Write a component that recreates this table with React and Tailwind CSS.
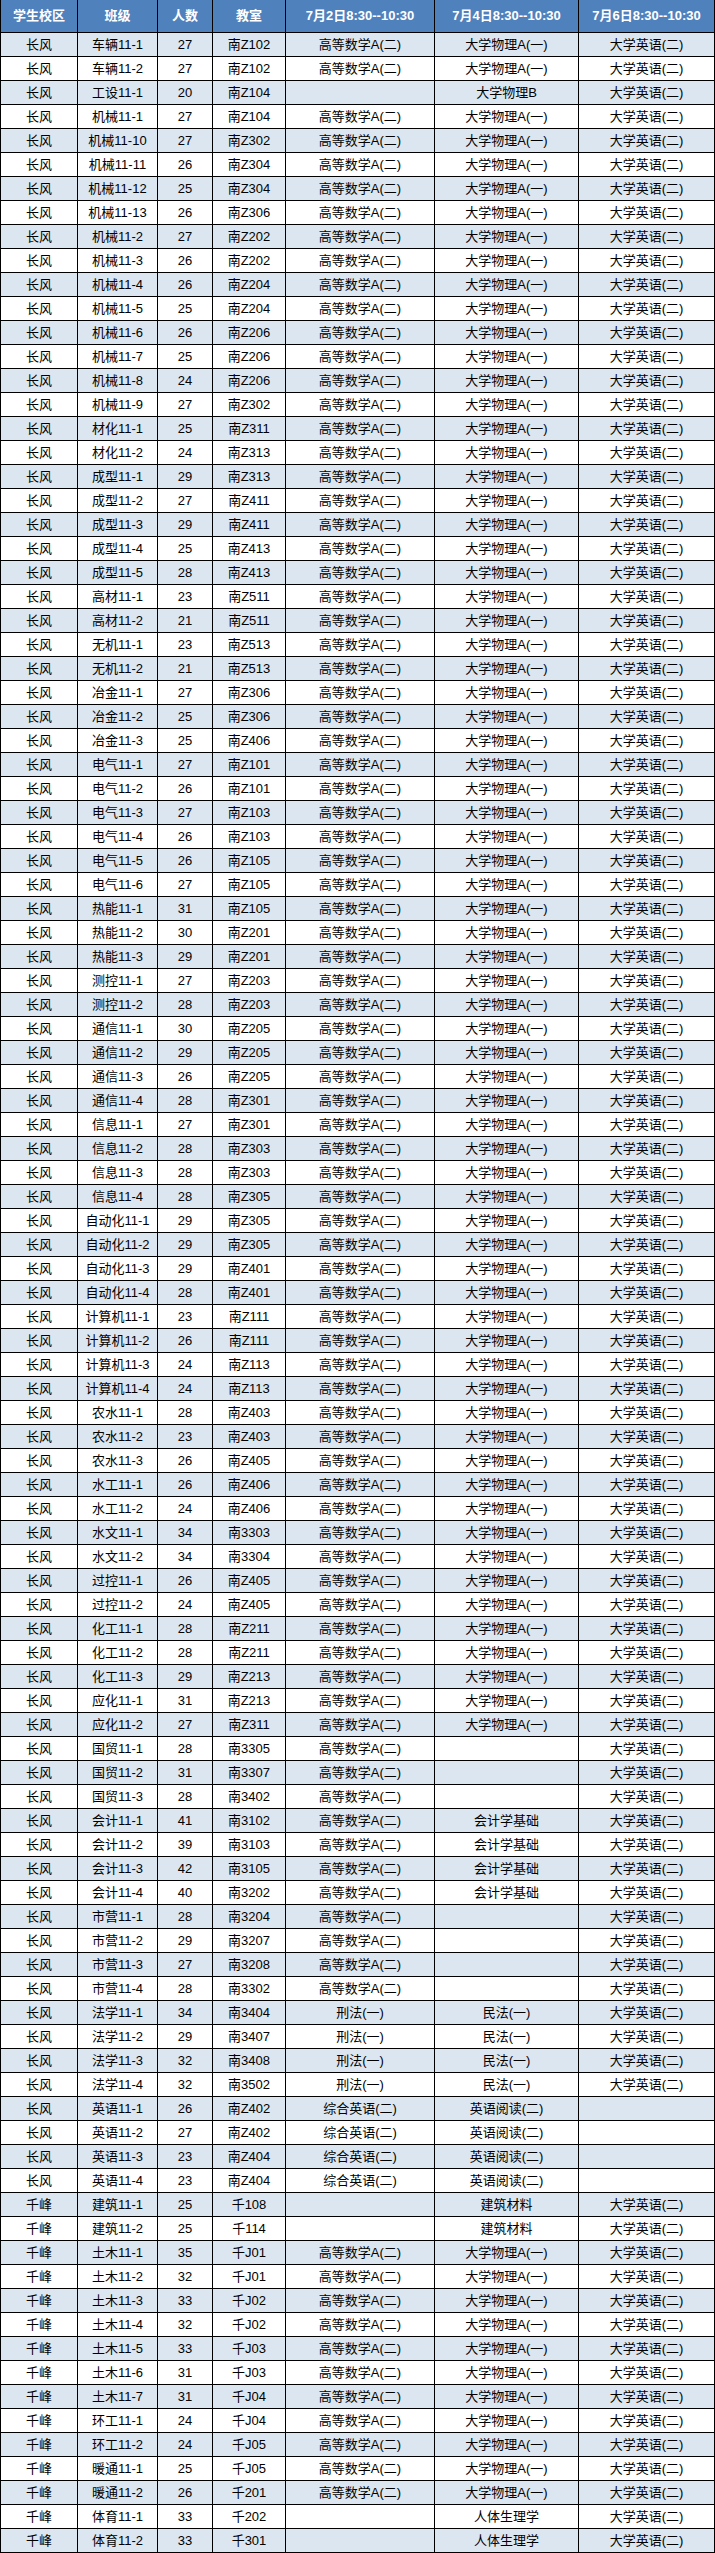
const A = "高等数学A(二)";
const P = "大学物理A(一)";
const E = "大学英语(二)";

const raw = [
  ["长风", "车辆11-1", "27", "南Z102", A, P, E],
  ["长风", "车辆11-2", "27", "南Z102", A, P, E],
  ["长风", "工设11-1", "20", "南Z104", "", "大学物理B", E],
  ["长风", "机械11-1", "27", "南Z104", A, P, E],
  ["长风", "机械11-10", "27", "南Z302", A, P, E],
  ["长风", "机械11-11", "26", "南Z304", A, P, E],
  ["长风", "机械11-12", "25", "南Z304", A, P, E],
  ["长风", "机械11-13", "26", "南Z306", A, P, E],
  ["长风", "机械11-2", "27", "南Z202", A, P, E],
  ["长风", "机械11-3", "26", "南Z202", A, P, E],
  ["长风", "机械11-4", "26", "南Z204", A, P, E],
  ["长风", "机械11-5", "25", "南Z204", A, P, E],
  ["长风", "机械11-6", "26", "南Z206", A, P, E],
  ["长风", "机械11-7", "25", "南Z206", A, P, E],
  ["长风", "机械11-8", "24", "南Z206", A, P, E],
  ["长风", "机械11-9", "27", "南Z302", A, P, E],
  ["长风", "材化11-1", "25", "南Z311", A, P, E],
  ["长风", "材化11-2", "24", "南Z313", A, P, E],
  ["长风", "成型11-1", "29", "南Z313", A, P, E],
  ["长风", "成型11-2", "27", "南Z411", A, P, E],
  ["长风", "成型11-3", "29", "南Z411", A, P, E],
  ["长风", "成型11-4", "25", "南Z413", A, P, E],
  ["长风", "成型11-5", "28", "南Z413", A, P, E],
  ["长风", "高材11-1", "23", "南Z511", A, P, E],
  ["长风", "高材11-2", "21", "南Z511", A, P, E],
  ["长风", "无机11-1", "23", "南Z513", A, P, E],
  ["长风", "无机11-2", "21", "南Z513", A, P, E],
  ["长风", "冶金11-1", "27", "南Z306", A, P, E],
  ["长风", "冶金11-2", "25", "南Z306", A, P, E],
  ["长风", "冶金11-3", "25", "南Z406", A, P, E],
  ["长风", "电气11-1", "27", "南Z101", A, P, E],
  ["长风", "电气11-2", "26", "南Z101", A, P, E],
  ["长风", "电气11-3", "27", "南Z103", A, P, E],
  ["长风", "电气11-4", "26", "南Z103", A, P, E],
  ["长风", "电气11-5", "26", "南Z105", A, P, E],
  ["长风", "电气11-6", "27", "南Z105", A, P, E],
  ["长风", "热能11-1", "31", "南Z105", A, P, E],
  ["长风", "热能11-2", "30", "南Z201", A, P, E],
  ["长风", "热能11-3", "29", "南Z201", A, P, E],
  ["长风", "测控11-1", "27", "南Z203", A, P, E],
  ["长风", "测控11-2", "28", "南Z203", A, P, E],
  ["长风", "通信11-1", "30", "南Z205", A, P, E],
  ["长风", "通信11-2", "29", "南Z205", A, P, E],
  ["长风", "通信11-3", "26", "南Z205", A, P, E],
  ["长风", "通信11-4", "28", "南Z301", A, P, E],
  ["长风", "信息11-1", "27", "南Z301", A, P, E],
  ["长风", "信息11-2", "28", "南Z303", A, P, E],
  ["长风", "信息11-3", "28", "南Z303", A, P, E],
  ["长风", "信息11-4", "28", "南Z305", A, P, E],
  ["长风", "自动化11-1", "29", "南Z305", A, P, E],
  ["长风", "自动化11-2", "29", "南Z305", A, P, E],
  ["长风", "自动化11-3", "29", "南Z401", A, P, E],
  ["长风", "自动化11-4", "28", "南Z401", A, P, E],
  ["长风", "计算机11-1", "23", "南Z111", A, P, E],
  ["长风", "计算机11-2", "26", "南Z111", A, P, E],
  ["长风", "计算机11-3", "24", "南Z113", A, P, E],
  ["长风", "计算机11-4", "24", "南Z113", A, P, E],
  ["长风", "农水11-1", "28", "南Z403", A, P, E],
  ["长风", "农水11-2", "23", "南Z403", A, P, E],
  ["长风", "农水11-3", "26", "南Z405", A, P, E],
  ["长风", "水工11-1", "26", "南Z406", A, P, E],
  ["长风", "水工11-2", "24", "南Z406", A, P, E],
  ["长风", "水文11-1", "34", "南3303", A, P, E],
  ["长风", "水文11-2", "34", "南3304", A, P, E],
  ["长风", "过控11-1", "26", "南Z405", A, P, E],
  ["长风", "过控11-2", "24", "南Z405", A, P, E],
  ["长风", "化工11-1", "28", "南Z211", A, P, E],
  ["长风", "化工11-2", "28", "南Z211", A, P, E],
  ["长风", "化工11-3", "29", "南Z213", A, P, E],
  ["长风", "应化11-1", "31", "南Z213", A, P, E],
  ["长风", "应化11-2", "27", "南Z311", A, P, E],
  ["长风", "国贸11-1", "28", "南3305", A, "", E],
  ["长风", "国贸11-2", "31", "南3307", A, "", E],
  ["长风", "国贸11-3", "28", "南3402", A, "", E],
  ["长风", "会计11-1", "41", "南3102", A, "会计学基础", E],
  ["长风", "会计11-2", "39", "南3103", A, "会计学基础", E],
  ["长风", "会计11-3", "42", "南3105", A, "会计学基础", E],
  ["长风", "会计11-4", "40", "南3202", A, "会计学基础", E],
  ["长风", "市营11-1", "28", "南3204", A, "", E],
  ["长风", "市营11-2", "29", "南3207", A, "", E],
  ["长风", "市营11-3", "27", "南3208", A, "", E],
  ["长风", "市营11-4", "28", "南3302", A, "", E],
  ["长风", "法学11-1", "34", "南3404", "刑法(一)", "民法(一)", E],
  ["长风", "法学11-2", "29", "南3407", "刑法(一)", "民法(一)", E],
  ["长风", "法学11-3", "32", "南3408", "刑法(一)", "民法(一)", E],
  ["长风", "法学11-4", "32", "南3502", "刑法(一)", "民法(一)", E],
  ["长风", "英语11-1", "26", "南Z402", "综合英语(二)", "英语阅读(二)", ""],
  ["长风", "英语11-2", "27", "南Z402", "综合英语(二)", "英语阅读(二)", ""],
  ["长风", "英语11-3", "23", "南Z404", "综合英语(二)", "英语阅读(二)", ""],
  ["长风", "英语11-4", "23", "南Z404", "综合英语(二)", "英语阅读(二)", ""],
  ["千峰", "建筑11-1", "25", "千108", "", "建筑材料", E],
  ["千峰", "建筑11-2", "25", "千114", "", "建筑材料", E],
  ["千峰", "土木11-1", "35", "千J01", A, P, E],
  ["千峰", "土木11-2", "32", "千J01", A, P, E],
  ["千峰", "土木11-3", "33", "千J02", A, P, E],
  ["千峰", "土木11-4", "32", "千J02", A, P, E],
  ["千峰", "土木11-5", "33", "千J03", A, P, E],
  ["千峰", "土木11-6", "31", "千J03", A, P, E],
  ["千峰", "土木11-7", "31", "千J04", A, P, E],
  ["千峰", "环工11-1", "24", "千J04", A, P, E],
  ["千峰", "环工11-2", "24", "千J05", A, P, E],
  ["千峰", "暖通11-1", "25", "千J05", A, P, E],
  ["千峰", "暖通11-2", "26", "千201", A, P, E],
  ["千峰", "体育11-1", "33", "千202", "", "人体生理学", E],
  ["千峰", "体育11-2", "33", "千301", "", "人体生理学", E],
];

const headers = ["学生校区", "班级", "人数", "教室", "7月2日8:30--10:30", "7月4日8:30--10:30", "7月6日8:30--10:30"];

const cols = "grid grid-cols-[77px_80px_55px_73px_149px_144px_136px]";

export default function App() {
  return (
    <div
      className="w-[715px] bg-white text-black border-l border-black"
      style={{ fontFamily: '"Liberation Sans", "Noto Sans CJK SC", sans-serif' }}
    >
      <div className={`${cols} h-[33px] bg-[#4f81bd] border-b border-black`}>
        {headers.map((h, i) => (
          <div
            key={i}
            className="flex items-center justify-center border-r border-black text-white font-bold text-[13px] whitespace-nowrap"
          >
            {h}
          </div>
        ))}
      </div>
      {raw.map((r, ri) => (
        <div
          key={ri}
          className={`${cols} h-6 border-b border-black ${ri % 2 === 0 ? "bg-[#dce6f1]" : "bg-white"}`}
        >
          {r.map((c, ci) => (
            <div
              key={ci}
              className="flex items-center justify-center border-r border-black text-[13px] leading-none whitespace-nowrap"
            >
              {c}
            </div>
          ))}
        </div>
      ))}
    </div>
  );
}
